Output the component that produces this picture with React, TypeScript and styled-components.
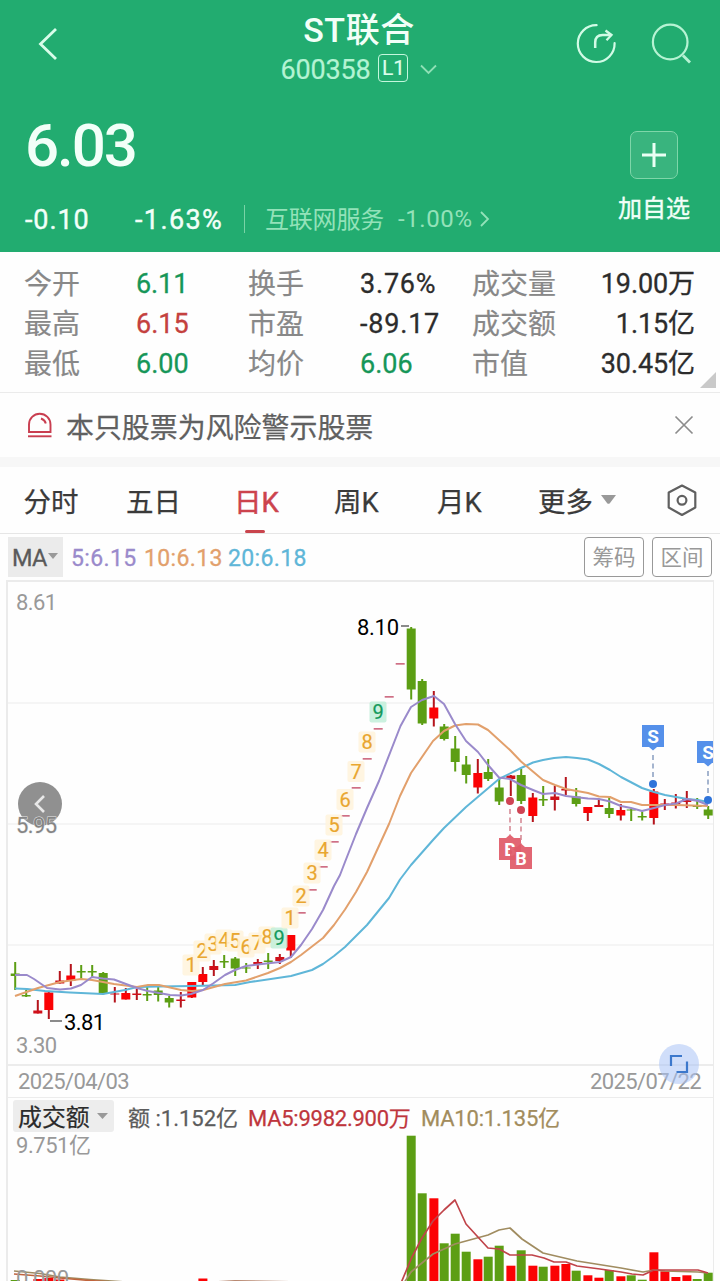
import React from "react";
import styled, { createGlobalStyle } from "styled-components";

const UP = "#fb0204";
const UP_WICK = "#b5141c";
const DOWN = "#5c9e14";
const MA5 = "#9a8acb";
const MA10 = "#e2a06c";
const MA20 = "#5fb6d8";

const GlobalStyle = createGlobalStyle`
  * { box-sizing: border-box; }
  body {
    margin: 0;
    background: #fff;
    font-family: Roboto, "Noto Sans CJK SC", sans-serif;
  }
  svg { display: block; }
`;

const Page = styled.main`
  width: 720px;
  height: 1281px;
  overflow: hidden;
  background: #fefefe;
  display: flex;
  flex-direction: column;
`;

/* ---------- header ---------- */

const Header = styled.header`
  height: 252px;
  flex: none;
  background: #22ac70;
  color: #f2fff8;
`;

const NavBar = styled.div`
  height: 90px;
  display: grid;
  grid-template-columns: 176px 1fr 176px;
`;

const BackSlot = styled.div`
  padding: 27px 0 0 37px;
`;

const TitleBlock = styled.div`
  display: flex;
  flex-direction: column;
  align-items: center;
  padding: 9px 2px 0 0;
`;

const Title = styled.h1`
  margin: 0;
  font-size: 34px;
  line-height: 42px;
  font-weight: 500;
  letter-spacing: 0.6px;
`;

const CodeRow = styled.div`
  display: flex;
  align-items: center;
  height: 36px;
  padding-top: 1px;
  color: #b4f3d3;
  font-size: 27px;
  letter-spacing: -0.2px;
  -webkit-text-stroke: 0.2px currentColor;
`;

const Level = styled.span`
  width: 30px;
  height: 28px;
  margin: -3px 12px 0 8px;
  border: 1.5px solid #c4f7dd;
  border-radius: 4px;
  color: #dcfdec;
  font-size: 21px;
  line-height: 26px;
  text-align: center;
`;

const NavIcons = styled.div`
  display: flex;
  gap: 30px;
  padding: 22px 0 0 32px;
`;

const QuoteArea = styled.div`
  display: flex;
  height: 162px;
`;

const QuoteMain = styled.div`
  flex: 1;
  padding: 20px 0 0 25px;
`;

const Price = styled.div`
  height: 72px;
  font-size: 60px;
  line-height: 72px;
  font-weight: 500;
  letter-spacing: -2px;
`;

const ChangeRow = styled.div`
  display: flex;
  align-items: center;
  height: 36px;
  margin-top: 19px;
  font-size: 27px;
`;

const Change = styled.span<{ $width: number; $gap: number }>`
  width: ${(p) => p.$width}px;
  padding-top: 1px;
  letter-spacing: ${(p) => p.$gap}px;
  -webkit-text-stroke: 0.4px currentColor;
`;

const Sector = styled.div`
  display: flex;
  align-items: center;
  height: 28px;
  padding-left: 20px;
  border-left: 1.5px solid #79d3a6;
  color: #93e2b9;
  font-size: 24px;
`;

const SectorName = styled.span`
  width: 133px;
  margin-top: -4px;
  letter-spacing: -0.2px;
`;

const SectorChange = styled.span`
  width: 81px;
  letter-spacing: 0.6px;
`;

const AddBlock = styled.div`
  width: 132px;
  padding-top: 41px;
  display: flex;
  flex-direction: column;
  align-items: center;
  font-size: 24px;
  line-height: 34px;
  gap: 13px;
  -webkit-text-stroke: 0.4px currentColor;
`;

const AddBox = styled.div`
  width: 48px;
  height: 48px;
  border: 1.5px solid #7ed6a9;
  border-radius: 7px;
  background: #39b47e;
  display: grid;
  place-items: center;
`;

/* ---------- key figures ---------- */

const Stats = styled.section`
  position: relative;
  height: 141px;
  flex: none;
  padding: 12px 25px 0 24px;
  border-bottom: 1px solid #ebebeb;
  display: grid;
  grid-template-columns: 112px 112px 112px 112px 84px 1fr;
  grid-auto-rows: 40px;
  line-height: 40px;
  align-content: start;
`;

const StatLabel = styled.span`
  padding-top: 1px;
  font-size: 28px;
  color: #888;
  -webkit-text-stroke: 0.2px currentColor;
`;

const StatValue = styled.span<{ $color?: string; $gap: number; $right?: boolean }>`
  font-size: 27px;
  letter-spacing: ${(p) => p.$gap}px;
  white-space: nowrap;
  color: ${(p) => p.$color ?? "#2c2c2c"};
  text-align: ${(p) => (p.$right ? "right" : "left")};
  -webkit-text-stroke: 0.3px currentColor;
`;

const Corner = styled.span`
  position: absolute;
  right: 4px;
  bottom: 4px;
  border-left: 16px solid transparent;
  border-bottom: 16px solid #c9c9c9;
`;

const Notice = styled.section`
  height: 74px;
  flex: none;
  padding: 0 26px 0 26px;
  border-bottom: 10px solid #f7f7f7;
  display: flex;
  align-items: center;
  gap: 12px;
  color: #606060;
  font-size: 27.95px;
`;

const NoticeText = styled.span`
  flex: 1;
  padding-top: 1px;
  -webkit-text-stroke: 0.25px currentColor;
`;

/* ---------- tabs ---------- */

const Tabs = styled.nav`
  height: 67px;
  flex: none;
  padding-left: 23.5px;
  border-bottom: 1px solid #e6e6e6;
  display: grid;
  grid-template-columns: 102.5px 108px 100px 103px 101px 129px 1fr;
  font-size: 27.5px;
  color: #3a3a3a;
  align-items: stretch;
`;

const Tab = styled.span<{ $active?: boolean }>`
  display: flex;
  align-items: center;
  justify-self: start;
  gap: 8px;
  padding-bottom: 1px;
  position: relative;
  -webkit-text-stroke: ${(p) => (p.$active ? 0.5 : 0.25)}px currentColor;
  color: ${(p) => (p.$active ? "#cc434d" : "inherit")};
`;

const Underline = styled.i`
  position: absolute;
  left: 11px;
  bottom: 0;
  width: 20px;
  height: 3px;
  border-radius: 2px;
  background: #c9444c;
`;

/* ---------- legends ---------- */

const LegendRow = styled.div`
  height: 46px;
  flex: none;
  display: flex;
  align-items: center;
  padding: 0 8px;
  gap: 8px;
`;

const Picker = styled.div`
  width: 55px;
  height: 40px;
  padding: 2px 0 0 4px;
  background: #ebebeb;
  display: flex;
  align-items: center;
  font-size: 23.5px;
  letter-spacing: -0.6px;
  color: #5a5a5a;
  -webkit-text-stroke: 0.3px currentColor;
`;

const PickerArrow = styled.svg`
  margin: -5px 0 0 1px;
`;

const Legend = styled.span<{ $color: string; $width: number }>`
  width: ${(p) => p.$width}px;
  margin-right: -8px;
  padding-top: 2px;
  color: ${(p) => p.$color};
  font-size: 23px;
  letter-spacing: 0.35px;
  white-space: nowrap;
  -webkit-text-stroke: 0.3px currentColor;
`;

const Spacer = styled.span`
  flex: 1;
`;

const OutlineButton = styled.button`
  width: 60px;
  height: 40px;
  padding: 0 0 3px;
  border: 1px solid #999;
  border-radius: 4px;
  background: #fff;
  color: #999;
  font: 21.5px Roboto, "Noto Sans CJK SC", sans-serif;
`;

/* ---------- chart panels ---------- */

const Frame = styled.section`
  width: 708px;
  margin-left: 6px;
  flex: none;
  border: 2px solid #ebebeb;
  border-right-width: 1px;
  border-bottom: 0;
`;

const DateRow = styled.div`
  position: relative;
  height: 34px;
  padding: 0 12px 0 10px;
  border-top: 2px solid #ececec;
  border-bottom: 1px solid #ececec;
  display: flex;
  justify-content: space-between;
  align-items: center;
  color: #999;
  font-size: 22px;
  letter-spacing: -0.6px;
`;

const ExpandButton = styled.span`
  position: absolute;
  right: 14px;
  top: -22px;
  width: 40px;
  height: 40px;
  border-radius: 50%;
  background: rgba(170, 195, 245, 0.55);
  display: grid;
  place-items: center;
`;

const VolumeLegend = styled.div`
  height: 36px;
  display: flex;
  align-items: center;
  padding-left: 5px;
`;

const VolumePicker = styled.div`
  width: 101px;
  height: 32px;
  margin-right: 14px;
  padding: 0 0 1px 5px;
  border-radius: 3px;
  background: #ededed;
  display: flex;
  align-items: center;
  gap: 7px;
  font-size: 23.9px;
  color: #2b2b2b;
  -webkit-text-stroke: 0.2px currentColor;
`;

const VolumeItem = styled.span<{ $color: string; $width: number; $gap: number }>`
  width: ${(p) => p.$width}px;
  color: ${(p) => p.$color};
  font-size: 22px;
  letter-spacing: ${(p) => p.$gap}px;
  white-space: nowrap;
  -webkit-text-stroke: 0.25px currentColor;
`;

/* ---------- chart data ---------- */

// [colour, high, body top, body bottom, low], vertical positions on the plot
type Candle = ["r" | "g", number, number, number, number];

const candles: Candle[] = [
  ["g", 962, 973.5, 976, 990], ["g", 990, 995, 996.5, 997], ["r", 1000, 1010.5, 1013.5, 1013.5],
  ["r", 992, 992.5, 1010, 1019], ["r", 971, 980.5, 983.5, 983.5], ["r", 964, 975.5, 981, 986],
  ["g", 965, 971, 972.5, 979], ["g", 965, 971, 972.5, 977], ["g", 972, 973, 993, 994.5],
  ["r", 987, 993.5, 994.5, 1002.5], ["r", 988, 993, 999.5, 999.5], ["r", 989, 993.5, 995, 1000],
  ["g", 987, 994, 995.5, 1001], ["g", 987, 990.5, 995, 1001.5], ["g", 996, 998, 1002.5, 1007.5],
  ["r", 992, 999.5, 1001, 1007.5], ["r", 982, 982, 997.5, 998], ["r", 967, 974, 982, 985],
  ["r", 960, 966, 970, 976], ["g", 955, 961, 962.5, 968], ["g", 957, 958.5, 968.5, 976],
  ["g", 963, 967.5, 968.5, 973], ["r", 959, 962, 964.5, 969], ["g", 953, 960.5, 962, 969],
  ["r", 954, 957, 961, 964], ["r", 935, 935, 950.5, 958],
  ["r", 912, 912, 913.5, 913.5], ["r", 889, 889, 890.5, 890.5], ["r", 866, 866, 867.5, 867.5],
  ["r", 841, 841, 842.5, 842.5], ["r", 815, 815, 816.5, 816.5], ["r", 787, 787, 788.5, 788.5],
  ["r", 758, 758, 759.5, 759.5], ["r", 728, 728, 729.5, 729.5], ["r", 696, 696, 697.5, 697.5],
  ["r", 663, 663, 664.5, 664.5],
  ["g", 627, 628.5, 689.5, 699.5], ["g", 679, 681, 723.5, 725], ["r", 691, 707.5, 718.5, 726.5],
  ["g", 724, 726.5, 739, 740.5], ["g", 736, 748.5, 762, 771.5], ["g", 756, 764.5, 775, 783.5],
  ["r", 759, 773, 787.5, 793.5], ["g", 759, 772, 779, 781], ["g", 779, 787.5, 801.5, 805],
  ["r", 775, 775.5, 779, 796], ["g", 769, 775, 801, 804], ["r", 793, 797.5, 816, 822],
  ["g", 786, 799, 800.5, 806], ["r", 786, 796.5, 800, 810.5], ["r", 777, 789, 790.5, 795],
  ["g", 788, 796.5, 804, 806.5], ["r", 807, 807, 813, 821], ["r", 799, 805, 807, 807],
  ["g", 796, 808, 814, 818], ["r", 804, 810, 815.5, 820.5], ["g", 809, 809.5, 810.5, 821],
  ["g", 812, 816, 817.5, 820.5], ["r", 789, 791.5, 818, 824.5], ["r", 799, 803.5, 805, 810],
  ["r", 794, 802.5, 804, 808.5], ["r", 791, 799, 802, 808], ["g", 798, 805, 807, 809],
  ["g", 806, 809.5, 815.5, 819],
];

const xAt = (i: number) => 15.2 + i * 11;

const ma5 = "15,975 27,975 34,979 47,988 60,989.5 71,988.5 81,985 92,977 103,978.5 114,979.5 126,984 137,988 148,991 159,993 170,995 181,995.5 191,994 203,990 213,983.5 225,975 235,970 246,966 262,964 280,962 291,957 301,945 312,929 323,910 334,886 340,875 345,862 356,834 367,808 379,781 400.5,726 411,707 422,700 434,696 444,704 455,724 466,741 478,752 488,765 499,777.5 510,779 521,785 533,790 543,794 555,793 566,796 588,798.5 599,799 610,801.5 621,806 631,808 642,811 654,808 665,805 676,803.5 687,799 698,801 708,805";
const ma10 = "15,996 38,988 60,982 81,979 92,980 114,984 137,987 148,985 159,985 181,990 192,991 203,990 225,984 246,980.5 268,973 280,968 291,962 301,955 323,938 334,925 345,909.5 356,892 367,872 378,848 389,824 400,796 411,773 433,741 444,731 455,725.5 466,724 478,724.5 488,730 510,750 521,761.5 543,780 555,785 566,789 588,793 599,796.5 610,797 621,802 631,802 642,805 676,805 708,806";
const ma20 = "15,988.5 27,989 45,991 70,992.5 103,994 125,990 137,987 159,986.5 192,986 235,985 250,982 291,976 312,970 323,964 334,956 345,947 367,925 389,898 400,879.5 411,865 433,840 444,828 466,807 499,779 521,768 533,762.5 543,760 554,758 566,757 577,758 588,759.5 599,764 610,770 621,777 642,788 654,792 665,795 687,799 698,800 708,802";

const counts: [number, number, string][] = [
  [191, 965, "1"], [202, 951, "2"], [213, 944, "3"], [224, 940, "4"], [235, 941, "5"],
  [246, 947, "6"], [257, 943, "7"], [267, 937, "8"], [279, 938, "9"],
  [290, 918, "1"], [301, 896, "2"], [312, 873, "3"], [323, 850, "4"], [334, 825, "5"],
  [345, 799.5, "6"], [356, 771.5, "7"], [367, 742, "8"], [378, 712, "9"],
];

// [candle index, colour, top of the bar]
const volumes: [number, "r" | "g", number][] = [
  [0, "g", 1279], [2, "r", 1278], [3, "r", 1277], [4, "r", 1278.5], [17, "r", 1277.5],
  [36, "g", 1134.7], [37, "g", 1192.3], [38, "r", 1197.3], [39, "g", 1242.3], [40, "g", 1232.7],
  [41, "g", 1250.7], [42, "r", 1258.3], [43, "g", 1255.7], [44, "g", 1244.7], [45, "r", 1264.7],
  [46, "g", 1249.3], [47, "r", 1264.7], [48, "g", 1265.7], [49, "r", 1264.7], [50, "r", 1263],
  [51, "g", 1269.7], [52, "r", 1274.3], [53, "r", 1276.7], [54, "g", 1269], [55, "r", 1275.3],
  [56, "g", 1274.3], [57, "g", 1278.7], [58, "r", 1251.3], [59, "r", 1270.3], [60, "r", 1276],
  [61, "r", 1274.3], [62, "g", 1278], [63, "g", 1271.7],
];

const volMa5 = "401,1282 412,1256 422,1237 433,1220 444,1209 455,1199 466,1223 488,1247 499,1248 510,1254 532,1254 544,1257 554,1261 566,1261 577,1265 600,1268 621,1271 632,1273 643,1274 654,1269 698,1269 708,1272";
const volMa10 = "404,1282 411,1271 433,1253 455,1243 488,1234 499,1229 510,1227 522,1238 543,1252 577,1260 621,1267 643,1271 654,1269 665,1270 698,1271 708,1272";

/* ---------- chart parts ---------- */

function Count({ x, y, n }: { x: number; y: number; n: string }) {
  const nine = n === "9";
  const ink = nine ? "#159a5c" : "#e9a62f";
  return (
    <g>
      <rect x={x - 8.5} y={y - 10.5} width={17} height={21} rx={2} fill={nine ? "#c2eed9" : "#fff3dc"} opacity={0.85} />
      <text x={x} y={y + 7} fontSize={20} textAnchor="middle" fill={ink} stroke={ink} strokeWidth={0.2}>
        {n}
      </text>
    </g>
  );
}

function CandleMark({ c, i }: { c: Candle; i: number }) {
  const [kind, high, top, bottom, low] = c;
  const x = xAt(i) + (kind === "r" ? 0.6 : 0);
  const height = bottom - top;
  if (high === top && low === bottom && height < 2) {
    return <rect x={xAt(i) - 4.5} y={top} width={9} height={1.7} fill="#cf6f85" />;
  }
  const body = kind === "g" ? DOWN : height > 5 ? UP : "#d0101a";
  return (
    <g>
      <rect x={x - 1} y={high} width={2} height={low - high} fill={kind === "g" ? DOWN : UP_WICK} />
      <rect x={x - 4.5} y={top} width={9} height={height} fill={body} />
    </g>
  );
}

function Buy({ x, dot, top }: { x: number; dot: number; top: number }) {
  return (
    <g>
      <path d={`M${x} ${dot + 8}V${top - 3}`} stroke="#d58b96" strokeWidth={1.6} strokeDasharray="5 3.5" />
      <circle cx={x} cy={dot} r={4} fill="#cf4454" />
      <path d={`M${x - 11} ${top}h7l4-3.5 4 3.5h7v22h-22z`} fill="#e05a68" opacity={0.93} />
      <text x={x} y={top + 17.5} fontSize={18} fontWeight={700} textAnchor="middle" fill="#fff">B</text>
    </g>
  );
}

function Sell({ x, dot, top }: { x: number; dot: number; top: number }) {
  return (
    <g>
      <path d={`M${x} ${top + 30}V${dot}`} stroke="#8fa3c4" strokeWidth={1.6} strokeDasharray="5 3.5" />
      <circle cx={x} cy={dot} r={4} fill="#2f74da" />
      <path d={`M${x - 11} ${top}h22v22h-7l-4 3.5-4-3.5h-7z`} fill="#5590ea" />
      <text x={x} y={top + 17.5} fontSize={19} fontWeight={700} textAnchor="middle" fill="#fff">S</text>
    </g>
  );
}

function PriceChart() {
  return (
    <svg width={705} height={482} viewBox="8 582 705 482">
      <path d="M8 703H713M8 824H713M8 945H713" stroke="#f2f2f2" strokeWidth={1.5} />
      {candles.map((c, i) => <CandleMark key={i} c={c} i={i} />)}
      <g fill="none" strokeWidth={2} strokeLinejoin="round">
        <polyline points={ma20} stroke={MA20} />
        <polyline points={ma10} stroke={MA10} />
        <polyline points={ma5} stroke={MA5} />
      </g>
      {counts.map(([x, y, n]) => <Count key={x} x={x} y={y} n={n} />)}
      <Buy x={510} dot={801} top={838} />
      <Buy x={521} dot={810} top={847} />
      <Sell x={653} dot={784} top={725} />
      <Sell x={708} dot={800} top={741} />
      <g fontSize={22} fill="#000">
        <text x={357} y={635} textLength={42}>8.10</text>
        <text x={64} y={1030} textLength={41}>3.81</text>
      </g>
      <path d="M401 626h8M50 1021h12" stroke="#666" strokeWidth={1.4} />
      <circle cx={40} cy={804} r={22} fill="#8a8a8a" opacity={0.95} />
      <path d="M44 796l-8 8 8 8" fill="none" stroke="#e8e8e8" strokeWidth={2.6} />
      <g fontSize={22} fill="#999">
        <text x={16} y={610} textLength={41}>8.61</text>
        <text x={16} y={833} textLength={41} fill="#858585" stroke="#e8e8e8" strokeWidth={1} paintOrder="stroke">5.95</text>
        <text x={16} y={1053} textLength={41}>3.30</text>
      </g>
    </svg>
  );
}

function VolumeChart() {
  return (
    <svg width={705} height={148} viewBox="8 1133 705 148">
      {volumes.map(([i, kind, top]) => (
        <rect key={i} x={xAt(i) - 4.5 + (kind === "r" ? 0.7 : 0)} y={top} width={9} height={1285 - top} fill={kind === "g" ? DOWN : UP} />
      ))}
      <g fill="none" strokeWidth={1.7} strokeLinejoin="round">
        <polyline points={volMa10} stroke="#a08c60" />
        <polyline points={volMa5} stroke="#c0444a" />
        <polyline points="14,1270 40,1272.5 60,1276 90,1278.5 125,1281" stroke="#a08c60" />
        <polyline points="14,1273 40,1275 60,1277 90,1279.5 125,1282" stroke="#c0643c" />
        <polyline points="215,1281 235,1280 300,1281" stroke="#a06040" />
      </g>
      <g fontSize={22} fill="#999">
        <text x={16} y={1152} textLength={75}>9.751亿</text>
        <text x={16} y={1284.5} textLength={53}>0.000</text>
      </g>
    </svg>
  );
}

// [label, value, letter spacing, colour]
const stats: [string, string, number, string?][] = [
  ["今开", "6.11", -0.1, "#169658"], ["换手", "3.76%", 0.8], ["成交量", "19.00万", -0.1],
  ["最高", "6.15", 0, "#c4413e"], ["市盈", "-89.17", 0.8], ["成交额", "1.15亿", -0.1],
  ["最低", "6.00", 0, "#169658"], ["均价", "6.06", 0, "#169658"], ["市值", "30.45亿", -0.1],
];

export default function App() {
  return (
    <Page>
      <GlobalStyle />
      <Header>
        <NavBar>
          <BackSlot>
            <svg width="22" height="34" viewBox="0 0 22 34" fill="none" stroke="#d9fdea" strokeWidth="2.8">
              <path d="M19 2L3.5 17L19 32" />
            </svg>
          </BackSlot>
          <TitleBlock>
            <Title>ST联合</Title>
            <CodeRow>
              600358
              <Level>L1</Level>
              <svg width="17" height="11" viewBox="0 0 17 11" fill="none" stroke="#8fe0b6" strokeWidth="1.8">
                <path d="M1 1.5l7.5 7.5L16 1.5" />
              </svg>
            </CodeRow>
          </TitleBlock>
          <NavIcons>
            <svg width="44" height="44" viewBox="0 0 44 44" fill="none" stroke="#d2fbe6" strokeWidth="2.2">
              <path d="M20.6 3.2A18.4 18.4 0 1 0 38.6 21.2" strokeLinecap="round" />
              <path d="M19.2 26v-5.5q0-7.5 7.5-7.5h8.5" strokeWidth="2.5" />
              <path d="M29.5 8.5l6 4.5-5 5.2" strokeWidth="2.3" />
            </svg>
            <svg width="44" height="44" viewBox="0 0 44 44" fill="none" stroke="#b6f3d3" strokeWidth="2.2">
              <circle cx="20.2" cy="20" r="17.3" />
              <path d="M33 33.5l7 7" strokeWidth="2.8" />
            </svg>
          </NavIcons>
        </NavBar>
        <QuoteArea>
          <QuoteMain>
            <Price>6.03</Price>
            <ChangeRow>
              <Change $width={110} $gap={0.9}>-0.10</Change>
              <Change $width={109} $gap={1.4}>-1.63%</Change>
              <Sector>
                <SectorName>互联网服务</SectorName>
                <SectorChange>-1.00%</SectorChange>
                <svg width="12" height="16" viewBox="0 0 12 16" fill="none" stroke="#93e2b9" strokeWidth="1.8">
                  <path d="M2 1l7 7-7 7" />
                </svg>
              </Sector>
            </ChangeRow>
          </QuoteMain>
          <AddBlock>
            <AddBox>
              <svg width="24" height="24" viewBox="0 0 24 24" stroke="#eafff4" strokeWidth="3">
                <path d="M0 12h24M12 0v24" />
              </svg>
            </AddBox>
            加自选
          </AddBlock>
        </QuoteArea>
      </Header>

      <Stats>
        {stats.map(([label, value, gap, color], i) => (
          <React.Fragment key={label}>
            <StatLabel>{label}</StatLabel>
            <StatValue $color={color} $gap={gap} $right={i % 3 === 2}>{value}</StatValue>
          </React.Fragment>
        ))}
        <Corner />
      </Stats>

      <Notice>
        <svg width="28" height="28" viewBox="0 0 28 28" fill="none" stroke="#c93e50" strokeWidth="1.9">
          <path d="M3 21V13.5a10.7 10.7 0 0 1 21.5 0V21z" />
          <path d="M2 25.3h23.5" />
          <path d="M15 7.5q4 1.5 4.8 5" />
        </svg>
        <NoticeText>本只股票为风险警示股票</NoticeText>
        <svg width="20" height="20" viewBox="0 0 20 20" stroke="#8c8c8c" strokeWidth="1.7">
          <path d="M1.5 1.5l17 17M18.5 1.5l-17 17" />
        </svg>
      </Notice>

      <Tabs>
        <Tab>分时</Tab>
        <Tab>五日</Tab>
        <Tab $active>日K<Underline /></Tab>
        <Tab>周K</Tab>
        <Tab>月K</Tab>
        <Tab>
          更多
          <svg width="15" height="9" viewBox="0 0 15 9" fill="#999"><path d="M0 0h15L8.8 8.2q-1.3 1.2-2.6 0z" /></svg>
        </Tab>
        <Tab>
          <svg width="32" height="34" viewBox="0 0 32 34" fill="none" stroke="#606060" strokeWidth="2.2" strokeLinejoin="round">
            <path d="M15 2.5L28.3 9.5v15L15 32L1.7 24.5V9.5z" />
            <circle cx="15" cy="17.3" r="4.4" />
          </svg>
        </Tab>
      </Tabs>

      <LegendRow>
        <Picker>
          MA
          <PickerArrow width="10" height="6" viewBox="0 0 10 6" fill="#999"><path d="M0 0h10L5 6z" /></PickerArrow>
        </Picker>
        <Legend $color={MA5} $width={73}>5:6.15</Legend>
        <Legend $color={MA10} $width={84}>10:6.13</Legend>
        <Legend $color={MA20} $width={84}>20:6.18</Legend>
        <Spacer />
        <OutlineButton>筹码</OutlineButton>
        <OutlineButton>区间</OutlineButton>
      </LegendRow>

      <Frame>
        <PriceChart />
        <DateRow>
          <span>2025/04/03</span>
          <span>2025/07/22</span>
          <ExpandButton>
            <svg width="20" height="20" viewBox="0 0 20 20" fill="none" stroke="#3c78cc" strokeWidth="2.2">
              <path d="M2 12V2h11M18 7.5V18H7.5" />
            </svg>
          </ExpandButton>
        </DateRow>
        <VolumeLegend>
          <VolumePicker>
            成交额
            <svg width="11" height="6" viewBox="0 0 11 6" fill="#999"><path d="M0 0h11L5.5 6z" /></svg>
          </VolumePicker>
          <VolumeItem $color="#5c5c5c" $width={120} $gap={0}>额 :1.152亿</VolumeItem>
          <VolumeItem $color="#bf363d" $width={173} $gap={-0.25}>MA5:9982.900万</VolumeItem>
          <VolumeItem $color="#a28c5c" $width={140} $gap={-0.2}>MA10:1.135亿</VolumeItem>
        </VolumeLegend>
        <VolumeChart />
      </Frame>
    </Page>
  );
}
